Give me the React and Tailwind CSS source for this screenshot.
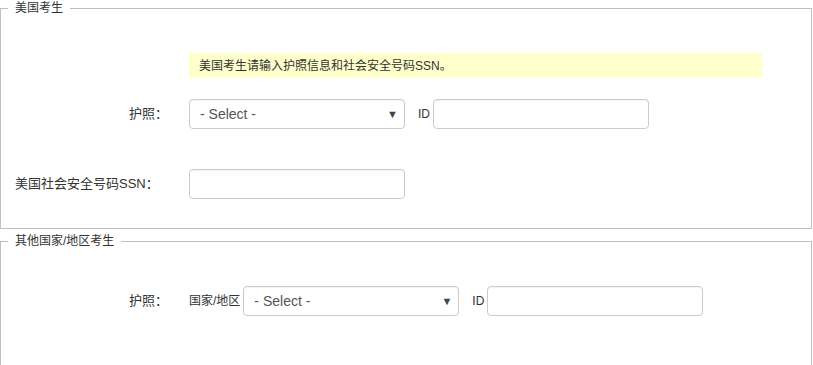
import React from 'react';

const FONT = "font-['Liberation_Sans','Noto_Sans_CJK_SC',sans-serif]";

// Fake select box, drawn like the native one in the shot
const SelectBox = () => (
  <div className="flex h-[30px] w-[216px] items-center justify-between rounded-[4px] border border-[#ccc] bg-white pl-[10px] pr-[6px] text-[14px] text-[#555] shadow-[inset_0_1px_1px_rgba(0,0,0,0.05)]">
    <span>- Select -</span>
    <span className="text-[11px] text-[#444]">▼</span>
  </div>
);

const TextBox = () => (
  <input
    type="text"
    className="h-[30px] w-[216px] rounded-[4px] border border-[#ccc] bg-white px-2 text-[14px] text-[#555] shadow-[inset_0_1px_1px_rgba(0,0,0,0.05)] outline-none"
  />
);

const Label = ({ children }) => (
  <div className="w-[188px] shrink-0 pl-[15px] pr-[21px] text-right text-[13px] text-[#333]">
    {children}
  </div>
);

const Group = ({ title, className = '', children }) => (
  <fieldset className={`w-[812px] border border-[#c0c0c0] p-0 ${className}`}>
    <legend className="ml-[7px] px-[7px] text-[12px] leading-[17px] text-[#333]">{title}</legend>
    {children}
  </fieldset>
);

export default function App() {
  return (
    <div className={`${FONT} bg-white`}>
      <Group title="美国考生" className="pb-[29px]">
        <div className="ml-[188px] mt-[36px] flex h-[25px] w-[573px] items-center bg-[#ffffcc] pl-[10px] text-[12px] text-[#333]">
          美国考生请输入护照信息和社会安全号码SSN。
        </div>

        <div className="mt-[21px] flex items-center">
          <Label>护照：</Label>
          <SelectBox />
          <span className="ml-[13px] mr-[3px] text-[12px] text-[#333]">ID</span>
          <TextBox />
        </div>

        <div className="mt-[40px] flex items-center">
          <div className="w-[188px] shrink-0 pl-[14px] text-[13px] text-[#333]">美国社会安全号码SSN：</div>
          <TextBox />
        </div>
      </Group>

      <Group title="其他国家/地区考生" className="mt-[4px] pb-[60px]">
        <div className="mt-[36px] flex items-center">
          <Label>护照：</Label>
          <span className="mr-[3px] text-[12px] text-[#333]">国家/地区</span>
          <SelectBox />
          <span className="ml-[13px] mr-[3px] text-[12px] text-[#333]">ID</span>
          <TextBox />
        </div>
      </Group>
    </div>
  );
}
